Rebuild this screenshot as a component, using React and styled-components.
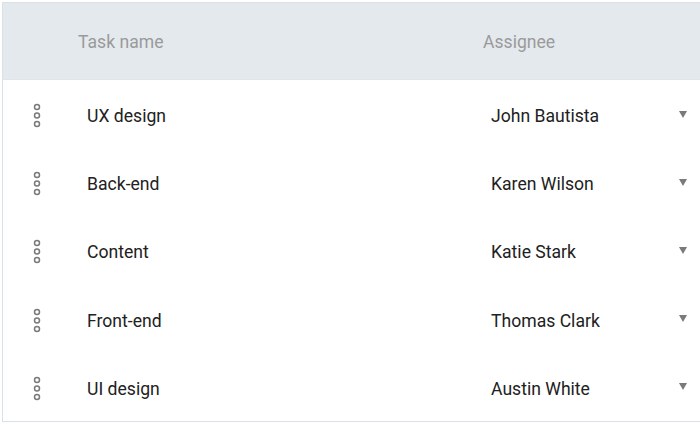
import React from "react";
import styled, { createGlobalStyle } from "styled-components";

const Global = createGlobalStyle`
  html, body { margin: 0; padding: 0; background: #fff; overflow: hidden; }
  body { font-family: Roboto, "Liberation Sans", sans-serif; }
`;

const Page = styled.div`
  padding: 2px 0 0 2px;
`;

const Table = styled.div`
  width: 720px;
  border: 1px solid #d9e0e6;
  background: #fff;
`;

const HeaderRow = styled.div`
  display: grid;
  grid-template-columns: 67px 405px 225px;
  height: 76px;
  align-items: center;
  background: #e4e9ee;
  border-bottom: 1px solid #dfe5ea;
`;

const HeadCell = styled.div`
  padding-left: 8px;
  padding-top: 2px;
  font-size: 17.6px;
  color: #9a9a9a;
`;

const Row = styled.div`
  display: grid;
  grid-template-columns: 67px 405px 225px;
  height: 68.2px;
  align-items: center;
`;

const Handle = styled.div`
  display: flex;
  justify-content: flex-start;
  padding-left: 29px;
  padding-top: 4px;
  align-items: center;
`;

const TaskCell = styled.div`
  padding-left: 17px;
  padding-top: 4px;
  font-size: 17.6px;
  color: #212121;
`;

const AssigneeCell = styled.div`
  display: flex;
  align-items: center;
  justify-content: space-between;
  padding: 0 13px 0 16px;
  font-size: 17.6px;
  color: #212121;
`;

const Name = styled.span`
  padding-top: 4px;
`;

const Caret = styled.span`
  width: 0;
  height: 0;
  border-left: 4.5px solid transparent;
  border-right: 4.5px solid transparent;
  border-top: 7px solid #7a7a7a;
`;

const Dots = () => (
  <svg width="10" height="28" viewBox="0 0 10 28">
    {[5, 13.5, 22].map((cy) => (
      <circle key={cy} cx="5" cy={cy} r="2.5" fill="none" stroke="#7a7a7a" strokeWidth="1.5" />
    ))}
  </svg>
);

const rows = [
  ["UX design", "John Bautista"],
  ["Back-end", "Karen Wilson"],
  ["Content", "Katie Stark"],
  ["Front-end", "Thomas Clark"],
  ["UI design", "Austin White"],
];

export default function App() {
  return (
    <Page>
      <Global />
      <Table>
        <HeaderRow>
          <div />
          <HeadCell>Task name</HeadCell>
          <HeadCell>Assignee</HeadCell>
        </HeaderRow>
        {rows.map(([task, who]) => (
          <Row key={task}>
            <Handle>
              <Dots />
            </Handle>
            <TaskCell>{task}</TaskCell>
            <AssigneeCell>
              <Name>{who}</Name>
              <Caret />
            </AssigneeCell>
          </Row>
        ))}
      </Table>
    </Page>
  );
}
